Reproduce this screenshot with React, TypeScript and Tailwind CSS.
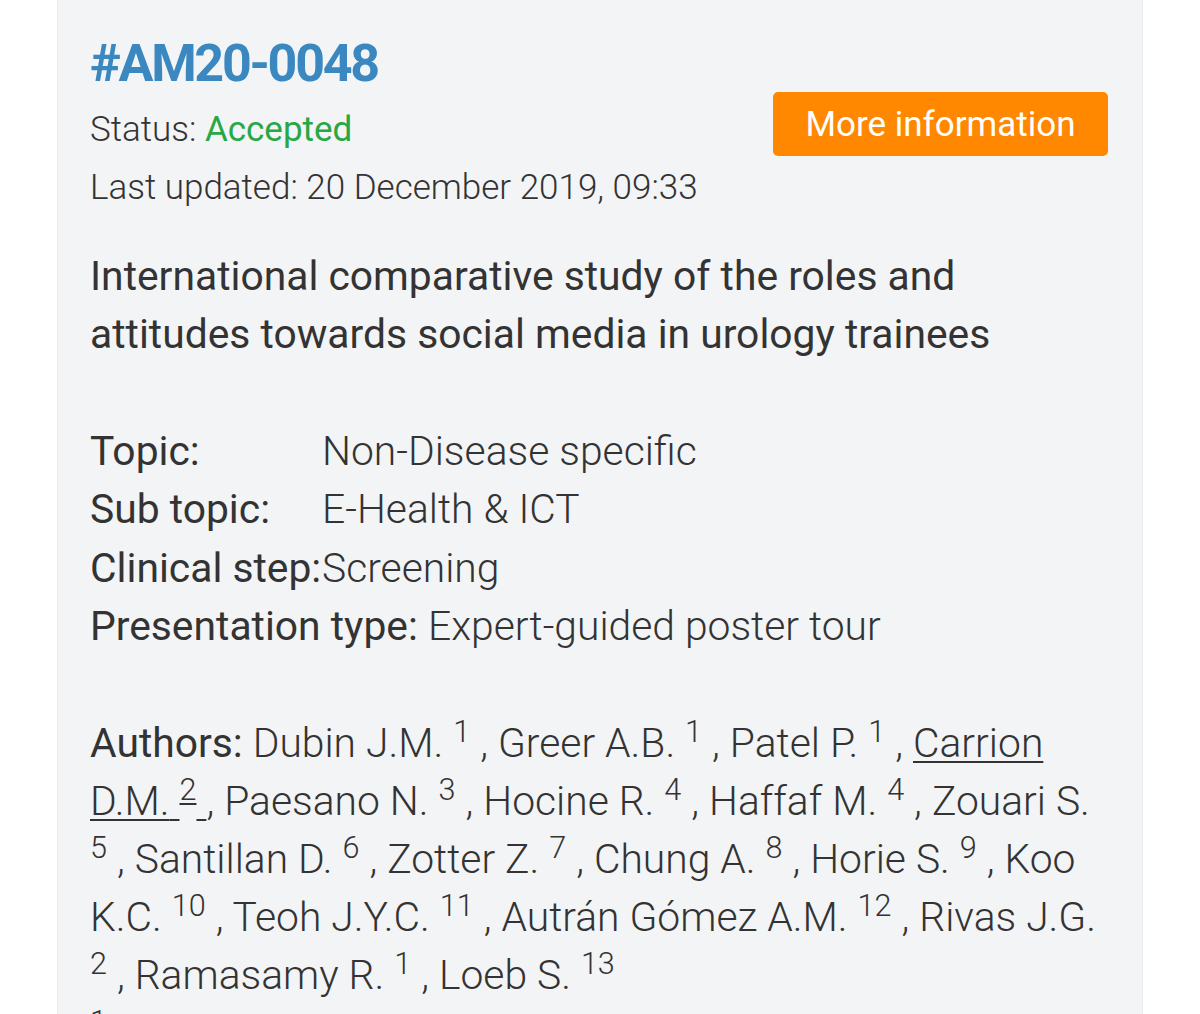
import React from "react";

const META = [
  { label: "Topic:", value: "Non-Disease specific" },
  { label: "Sub topic:", value: "E-Health & ICT" },
  { label: "Clinical step:", value: "Screening" },
];

const AUTHORS: { name: string; aff: string; link?: boolean }[] = [
  { name: "Dubin J.M.", aff: "1" },
  { name: "Greer A.B.", aff: "1" },
  { name: "Patel P.", aff: "1" },
  { name: "Carrion D.M.", aff: "2", link: true },
  { name: "Paesano N.", aff: "3" },
  { name: "Hocine R.", aff: "4" },
  { name: "Haffaf M.", aff: "4" },
  { name: "Zouari S.", aff: "5" },
  { name: "Santillan D.", aff: "6" },
  { name: "Zotter Z.", aff: "7" },
  { name: "Chung A.", aff: "8" },
  { name: "Horie S.", aff: "9" },
  { name: "Koo K.C.", aff: "10" },
  { name: "Teoh J.Y.C.", aff: "11" },
  { name: "Autrán Gómez A.M.", aff: "12" },
  { name: "Rivas J.G.", aff: "2" },
  { name: "Ramasamy R.", aff: "1" },
  { name: "Loeb S.", aff: "13" },
];

export default function App() {
  return (
    <div className="h-[1014px] w-full overflow-hidden bg-white">
      <div className="ml-[57px] w-[1086px] border-x border-[#eaecee] bg-[#f3f4f6] px-[32px] pt-[33px] pb-10 text-[#333] font-['Roboto',sans-serif]">
        {/* Header */}
        <div className="flex justify-between">
          <div>
            <h1 className="text-[52px] font-bold leading-[62px] tracking-[-2.3px] text-[#3a88bf]">#AM20-0048</h1>
            <p className="mt-[6px] text-[35px] font-light leading-[58px]">
              Status: <span className="font-normal text-[#28a745]">Accepted</span>
            </p>
            <p className="text-[35px] font-light leading-[58px]">Last updated: 20 December 2019, 09:33</p>
          </div>
          <button className="mt-[59px] mr-[2px] h-[64px] w-[335px] self-start rounded-[5px] bg-[#ff8800] text-[35px] leading-none text-white">
            More information
          </button>
        </div>

        {/* Title */}
        <h2 className="mt-[30px] text-[40.8px] font-normal leading-[58px]">
          International comparative study of the roles and attitudes towards social media in urology trainees
        </h2>

        {/* Meta */}
        <div className="mt-[59px] text-[40.8px] leading-[58.3px]">
          {META.map((m) => (
            <div key={m.label} className="flex">
              <span className="min-w-[232px] shrink-0 whitespace-nowrap font-normal">{m.label}</span>
              <span className="font-light">{m.value}</span>
            </div>
          ))}
          <div>
            <span className="font-normal">Presentation type:</span> <span className="font-light">Expert-guided poster tour</span>
          </div>
        </div>

        {/* Authors */}
        <p className="mt-[59px] text-[40.8px] font-light leading-[58px]">
          <span className="font-normal">Authors:</span>{" "}
          {AUTHORS.map((a, i) => (
            <React.Fragment key={i}>
              {a.link ? (
                <>
                  <span className="underline decoration-2 underline-offset-[4px]">{a.name} </span>
                  <sup className="underline decoration-2 underline-offset-[3px]">{a.aff}</sup>
                  <span className="underline decoration-2 underline-offset-[4px]"> </span>
                </>
              ) : (
                <>
                  {a.name} <sup>{a.aff}</sup>{" "}
                </>
              )}
              {i < AUTHORS.length - 1 ? ", " : ""}
            </React.Fragment>
          ))}
        </p>
        <p className="text-[40.8px] font-light leading-[58px]">
          <sup>1</sup> Department of Urology, University of Miami, Miami, United States of America
        </p>
      </div>
    </div>
  );
}
